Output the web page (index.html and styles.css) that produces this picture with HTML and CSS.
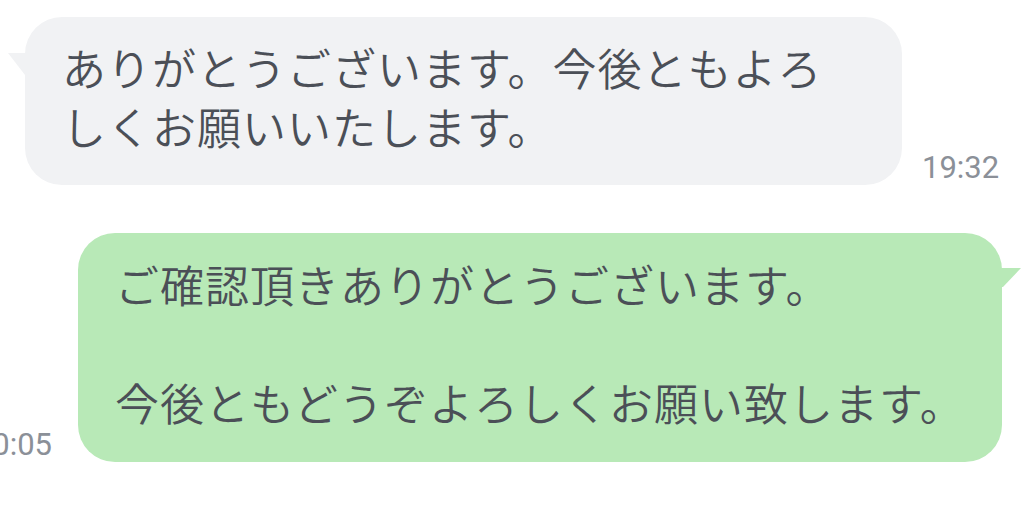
FILE: index.html
```html
<!DOCTYPE html>
<html lang="ja">
<head>
<meta charset="utf-8">
<title>Chat</title>
<link rel="stylesheet" href="styles.css">
</head>
<body>
<div class="chat">
  <div class="row row-in">
    <div class="bubble bubble-in">ありがとうございます。今後ともよろしくお願いいたします。</div>
    <div class="time">19:32</div>
  </div>
  <div class="row row-out">
    <div class="time">20:05</div>
    <div class="bubble bubble-out">ご確認頂きありがとうございます。<br><br>今後ともどうぞよろしくお願い致します。</div>
  </div>
</div>
</body>
</html>
```
FILE: styles.css
```css
html, body {
  margin: 0;
  padding: 0;
  background: #ffffff;
}
body {
  width: 1027px;
  height: 510px;
  overflow: hidden;
}
.chat {
  display: flex;
  flex-direction: column;
  padding-top: 17px;
}
.row {
  display: flex;
  align-items: flex-end;
}
.row-in {
  padding-left: 25px;
  gap: 20px;
}
.row-out {
  justify-content: flex-end;
  padding-right: 25px;
  gap: 26px;
  margin-top: 48px;
}
.bubble {
  position: relative;
  box-sizing: border-box;
  flex-shrink: 0;
  font-family: "Noto Sans CJK JP", sans-serif;
  font-size: 44px;
  font-weight: 350;
  letter-spacing: 1px;
  line-height: 59px;
  color: #4b4f57;
  border-radius: 37px;
  padding: 21px 38px 29px 37px;
}
.bubble-in {
  width: 877px;
  background: #f1f2f4;
}
.bubble-out {
  width: 924px;
  white-space: nowrap;
  background: #b8e9b7;
  padding-top: 22px;
  padding-bottom: 30px;
}
.bubble-in::before {
  content: "";
  position: absolute;
  left: -17px;
  top: 36px;
  width: 20px;
  height: 22px;
  background: #f1f2f4;
  clip-path: polygon(0 0, 100% 0, 100% 100%, 85% 100%);
}
.bubble-out::after {
  content: "";
  position: absolute;
  right: -19px;
  top: 35px;
  width: 22px;
  height: 19px;
  background: #b8e9b7;
  clip-path: polygon(0 0, 100% 0, 18% 100%, 0 100%);
}
.time {
  flex-shrink: 0;
  font-family: Roboto, "Liberation Sans", sans-serif;
  font-size: 31px;
  line-height: 1;
  color: #8b9098;
  margin-bottom: 2px;
}
```
